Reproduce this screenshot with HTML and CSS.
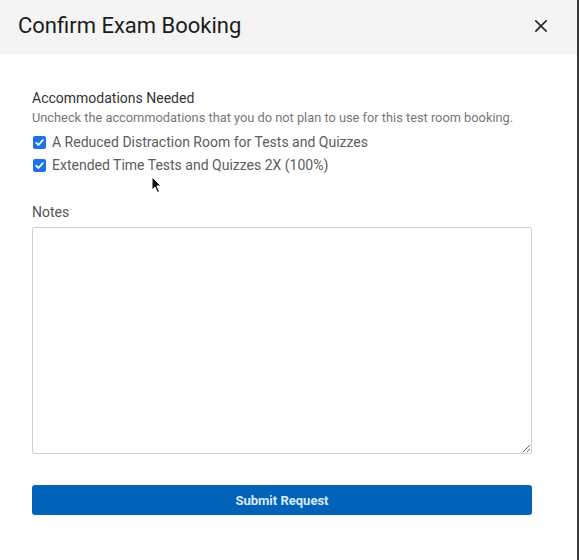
FILE: index.html
```html
<!DOCTYPE html>
<html>
<head>
<meta charset="utf-8">
<link rel="stylesheet" href="styles.css">
</head>
<body>
<div class="dialog">
  <div class="header">
    <h1 class="title">Confirm Exam Booking</h1>
    <button class="close" aria-label="Close">
      <svg width="12" height="12" viewBox="0 0 12 12"><path d="M1 1 L11 11 M11 1 L1 11" stroke="#222" stroke-width="1.7" stroke-linecap="square"/></svg>
    </button>
  </div>
  <div class="body">
    <div class="section-title">Accommodations Needed</div>
    <div class="hint">Uncheck the accommodations that you do not plan to use for this test room booking.</div>
    <label class="check-row first"><span class="box"><svg width="13" height="13" viewBox="0 0 13 13"><path d="M3.2 6.8 L5.5 9 L9.8 4.2" fill="none" stroke="#fff" stroke-width="1.8" stroke-linecap="round" stroke-linejoin="round"/></svg></span>A Reduced Distraction Room for Tests and Quizzes</label>
    <label class="check-row"><span class="box"><svg width="13" height="13" viewBox="0 0 13 13"><path d="M3.2 6.8 L5.5 9 L9.8 4.2" fill="none" stroke="#fff" stroke-width="1.8" stroke-linecap="round" stroke-linejoin="round"/></svg></span>Extended Time Tests and Quizzes 2X (100%)</label>
    <div class="notes-label">Notes</div>
    <textarea class="notes"></textarea>
    <button class="submit">Submit Request</button>
  </div>
  <svg class="cursor" width="12" height="18" viewBox="0 0 12 18"><path d="M1 1 L1 14 L4 11 L6.5 16.5 L8.5 15.5 L6 10 L10 10 Z" fill="#111" stroke="#fff" stroke-width="1"/></svg>
</div>
</body>
</html>
```
FILE: styles.css
```css
html, body {
  margin: 0;
  padding: 0;
  background: #ffffff;
}
body {
  font-family: Roboto, "Liberation Sans", sans-serif;
  width: 579px;
  height: 560px;
  overflow: hidden;
}
.dialog {
  position: relative;
  width: 577px;
  height: 560px;
  border-right: 2px solid #3a3a3a;
  background: #fff;
}
.header {
  height: 54px;
  background: #f4f4f4;
  display: flex;
  align-items: center;
  justify-content: space-between;
  padding: 0 30px 0 18px;
}
.title {
  margin: 0;
  font-size: 22px;
  font-weight: 400;
  color: #1b1b1b;
  line-height: 26px;
  padding-bottom: 2px;
}
.close {
  border: 0;
  background: transparent;
  padding: 0;
  width: 12px;
  height: 12px;
  display: flex;
  margin-bottom: 2px;
}
.body {
  padding: 36px 45px 0 32px;
  display: flex;
  flex-direction: column;
}
.section-title {
  font-size: 14px;
  color: #333;
  line-height: 16px;
}
.hint {
  font-size: 12.8px;
  color: #777;
  line-height: 16px;
  margin-top: 4px;
}
.check-row {
  display: flex;
  align-items: center;
  font-size: 14px;
  color: #5c5c5c;
  line-height: 23px;
}
.check-row.first {
  margin-top: 5px;
}
.box {
  width: 13px;
  height: 13px;
  border-radius: 2px;
  background: #1a73e8;
  margin: 0 6px 0 1px;
  display: flex;
}
.notes-label {
  font-size: 14px;
  color: #555;
  line-height: 16px;
  margin-top: 27px;
}
.notes {
  margin-top: 7px;
  width: 500px;
  height: 227px;
  box-sizing: border-box;
  border: 1px solid #cfcfcf;
  border-radius: 2px;
  resize: both;
  font-family: inherit;
}
.submit {
  margin-top: 31px;
  width: 500px;
  height: 30px;
  border: 0;
  border-radius: 3px;
  background: #0062b8;
  color: #dbeaff;
  font-family: inherit;
  font-size: 13px;
  font-weight: 700;
}
.cursor {
  position: absolute;
  left: 151px;
  top: 176px;
}
```
